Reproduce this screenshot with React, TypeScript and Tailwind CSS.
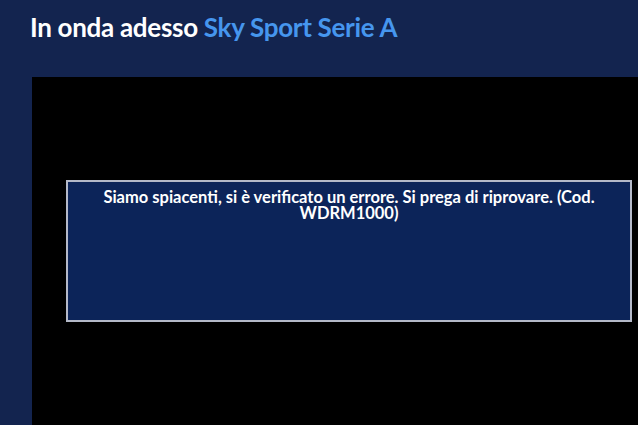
export default function App() {
  return (
    <div className="w-[638px] h-[425px] overflow-hidden bg-[#13244f] flex flex-col" style={{ fontFamily: "Lato, 'Open Sans', sans-serif" }}>
      <div className="h-[77px] pl-[30px] pt-[11px]">
        <h1 className="text-[26px] leading-[32px] font-bold text-white tracking-[-0.3px]">
          In onda adesso <span className="text-[#4696ee]">Sky Sport Serie A</span>
        </h1>
      </div>
      <div className="flex-1 ml-[32px] bg-black pt-[103px] pl-[34px] pr-[6px]">
        <div className="h-[142px] border-2 border-[#b4b9c8] bg-[#0c2459] px-[20px] pt-[7px] text-center">
          <p className="text-[16.5px] leading-[16px] font-bold text-white">
            Siamo spiacenti, si è verificato un errore. Si prega di riprovare. (Cod. WDRM1000)
          </p>
        </div>
      </div>
    </div>
  );
}
